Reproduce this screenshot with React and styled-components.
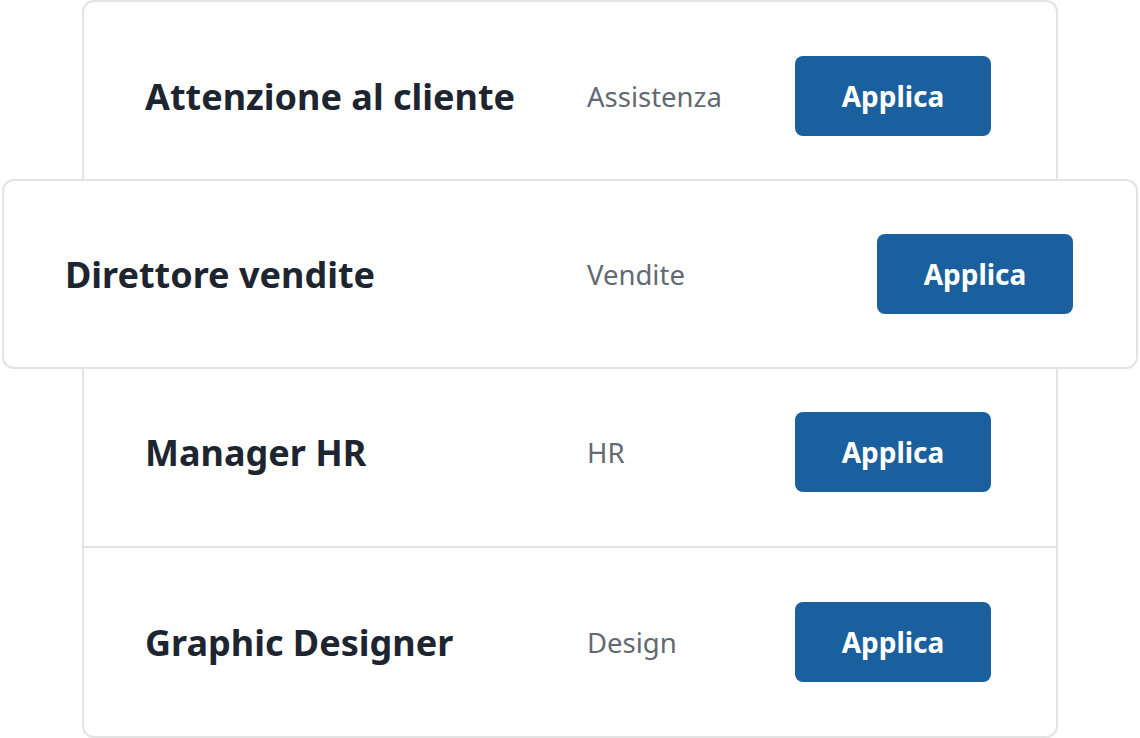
import React from "react";
import styled, { createGlobalStyle } from "styled-components";

const Global = createGlobalStyle`
  html, body { margin: 0; padding: 0; background: #ffffff; }
  body { font-family: "Noto Sans", "Open Sans", sans-serif; }
  * { box-sizing: border-box; }
`;

const List = styled.div`
  margin-left: 82px;
  width: 976px;
  border: 2px solid #e3e3e3;
  border-radius: 12px;
  background: #ffffff;
  display: flex;
  flex-direction: column;
`;

const Row = styled.div`
  display: grid;
  grid-template-columns: ${(p) => p.$titleCol}px 1fr auto;
  align-items: center;
  height: ${(p) => p.$h}px;
  padding: 0 65px 0 61px;
  border-bottom: ${(p) => (p.$divider ? "2px solid #e3e3e3" : "none")};
`;

const Featured = styled(Row)`
  position: relative;
  z-index: 1;
  margin: -11px -82px;
  padding: 0 63px 0 61px;
  background: #ffffff;
  border: 2px solid #e3e3e3;
  border-radius: 12px;
`;

const Title = styled.div`
  font-size: 36px;
  font-weight: 700;
  color: #1d2530;
  white-space: nowrap;
`;

const Category = styled.div`
  font-size: 27.5px;
  font-weight: 400;
  color: #636972;
`;

const ApplyButton = styled.button`
  width: 196px;
  height: 80px;
  border: none;
  border-radius: 8px;
  background: #1a5f9e;
  color: #ffffff;
  font-family: "Noto Sans", "Open Sans", sans-serif;
  font-size: 28px;
  font-weight: 700;
  cursor: pointer;
`;

const jobs = [
  { title: "Attenzione al cliente", cat: "Assistenza" },
  { title: "Direttore vendite", cat: "Vendite" },
  { title: "Manager HR", cat: "HR" },
  { title: "Graphic Designer", cat: "Design" },
];

export default function App() {
  return (
    <>
      <Global />
      <List>
        <Row $titleCol={442} $h={188}>
          <Title>{jobs[0].title}</Title>
          <Category>{jobs[0].cat}</Category>
          <ApplyButton>Applica</ApplyButton>
        </Row>
        <Featured $titleCol={522} $h={190}>
          <Title>{jobs[1].title}</Title>
          <Category>{jobs[1].cat}</Category>
          <ApplyButton>Applica</ApplyButton>
        </Featured>
        <Row $titleCol={442} $h={190} $divider>
          <Title>{jobs[2].title}</Title>
          <Category>{jobs[2].cat}</Category>
          <ApplyButton>Applica</ApplyButton>
        </Row>
        <Row $titleCol={442} $h={188}>
          <Title>{jobs[3].title}</Title>
          <Category>{jobs[3].cat}</Category>
          <ApplyButton>Applica</ApplyButton>
        </Row>
      </List>
    </>
  );
}
